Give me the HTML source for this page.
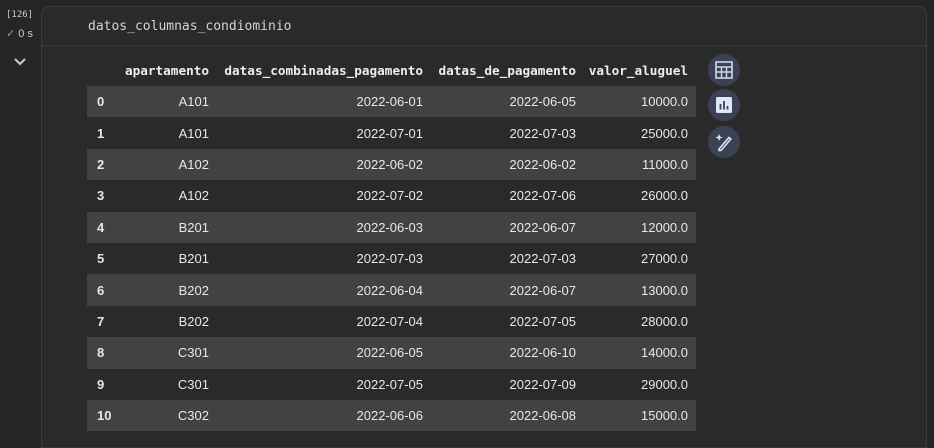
<html><head><style>
body{margin:0;background:#262626;width:934px;height:433px;overflow:hidden;font-family:"Liberation Sans",sans-serif;position:relative}
.gut{position:absolute;left:0;top:0;width:40px;color:#ccc}
.cell{position:absolute;left:41px;top:6px;width:884px;height:440px;border:1px solid #3a3a3a;border-radius:8px 8px 0 0;background:#2a2a2a}
.code{height:39px;border-bottom:1px solid #3a3a3a;font-family:"DejaVu Sans Mono",monospace;font-size:13px;color:#d4d4d4;padding:12px 0 0 46px;box-sizing:border-box}
table{position:absolute;left:45px;top:47px;border-collapse:collapse;font-size:13px;color:#e8e8e8;table-layout:fixed;width:609px}
th{font-family:"DejaVu Sans Mono",monospace;font-size:12.7px;font-weight:bold;text-align:right;height:32px;padding:0 8px 0 0;color:#eee;white-space:nowrap;overflow:visible}
td{height:31.4px;padding:0 8px 0 0;text-align:right;box-sizing:border-box}
td:first-child{text-align:left;font-weight:bold;padding-left:10px}
tr.s td{background:#424242}
.ic{position:absolute;left:708px;width:32px;height:32px;border-radius:50%;background:#3a4253;display:flex;align-items:center;justify-content:center}
</style></head><body>
<div class="gut">
<div style="position:absolute;left:6px;top:10px;font-family:'DejaVu Sans Mono',monospace;font-size:9px">[126]</div>
<div style="position:absolute;left:6px;top:27px;font-size:11px"><span style="color:#5ec06a">✓</span> 0 s</div>
<svg style="position:absolute;left:14px;top:58px" width="12" height="8"><path d="M1 1 L6 6 L11 1" stroke="#ccc" stroke-width="2" fill="none"/></svg>
</div>
<div class="cell"><div class="code">datos_columnas_condiominio</div>
<table>
<colgroup><col style="width:30px"><col style="width:100px"><col style="width:214px"><col style="width:153px"><col style="width:112px"></colgroup>
<tr><th></th><th>apartamento</th><th>datas_combinadas_pagamento</th><th>datas_de_pagamento</th><th>valor_aluguel</th></tr>
<tr class="s"><td>0</td><td>A101</td><td>2022-06-01</td><td>2022-06-05</td><td>10000.0</td></tr>
<tr><td>1</td><td>A101</td><td>2022-07-01</td><td>2022-07-03</td><td>25000.0</td></tr>
<tr class="s"><td>2</td><td>A102</td><td>2022-06-02</td><td>2022-06-02</td><td>11000.0</td></tr>
<tr><td>3</td><td>A102</td><td>2022-07-02</td><td>2022-07-06</td><td>26000.0</td></tr>
<tr class="s"><td>4</td><td>B201</td><td>2022-06-03</td><td>2022-06-07</td><td>12000.0</td></tr>
<tr><td>5</td><td>B201</td><td>2022-07-03</td><td>2022-07-03</td><td>27000.0</td></tr>
<tr class="s"><td>6</td><td>B202</td><td>2022-06-04</td><td>2022-06-07</td><td>13000.0</td></tr>
<tr><td>7</td><td>B202</td><td>2022-07-04</td><td>2022-07-05</td><td>28000.0</td></tr>
<tr class="s"><td>8</td><td>C301</td><td>2022-06-05</td><td>2022-06-10</td><td>14000.0</td></tr>
<tr><td>9</td><td>C301</td><td>2022-07-05</td><td>2022-07-09</td><td>29000.0</td></tr>
<tr class="s"><td>10</td><td>C302</td><td>2022-06-06</td><td>2022-06-08</td><td>15000.0</td></tr>
</table></div>
<div class="ic" style="top:54px"><svg width="18" height="18"><rect x="1" y="1" width="16" height="16" fill="none" stroke="#cfd8ea" stroke-width="1.6"/><path d="M1 6H17M1 11H17M6.5 6V17M11.5 6V17" stroke="#cfd8ea" stroke-width="1.4"/></svg></div>
<div class="ic" style="top:89px"><svg width="16" height="16"><rect width="16" height="16" rx="1.5" fill="#dfe6f5"/><path d="M4.5 7V12.5M8 4V12.5M11.5 9V12.5" stroke="#3a4253" stroke-width="1.8"/></svg></div>
<div class="ic" style="top:126px"><svg width="20" height="20"><path d="M5 17L15 5.5l1.8 1.6L7 18.5H5z" fill="none" stroke="#dfe6f5" stroke-width="1.6"/><path d="M5 2L6 4.5 8.5 5.5 6 6.5 5 9 4 6.5 1.5 5.5 4 4.5z" fill="#dfe6f5"/></svg></div>
</body></html>
